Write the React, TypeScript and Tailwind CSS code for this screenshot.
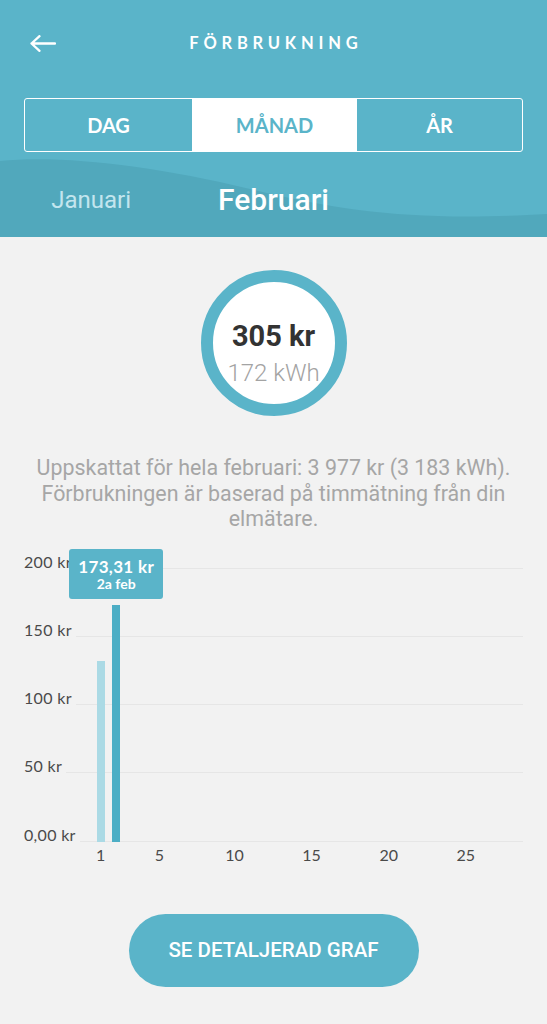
import React from "react";

const days = Array.from({ length: 28 }, (_, i) => i + 1);
const values: Record<number, number> = { 1: 131.9, 2: 173.31 };
const xLabels = [1, 5, 10, 15, 20, 25];
const yLabels = ["200 kr", "150 kr", "100 kr", "50 kr", "0,00 kr"];

const App = () => {
  return (
    <div className="min-h-screen w-full bg-[#f2f2f2] font-['Roboto',sans-serif]">
      {/* header */}
      <div className="relative h-[237px] bg-[#5ab4c9] overflow-hidden">
        <svg
          className="absolute left-0 bottom-0"
          width="547"
          height="80"
          viewBox="0 0 547 80"
          preserveAspectRatio="none"
        >
          <path
            d="M0 4 C60 -2 150 8 250 32 C350 56 420 64 547 57 L547 80 L0 80 Z"
            fill="#51a8bc"
          />
        </svg>

        <div className="relative grid grid-cols-[1fr_auto_1fr] items-center pt-[30px] h-[57px] px-[30px]">
          <svg width="26" height="17" viewBox="0 0 26 17" fill="none">
            <path
              d="M1.5 8.5H25 M9.5 1.2L1.5 8.5L9.5 15.8"
              stroke="white"
              strokeWidth="2.3"
              strokeLinecap="round"
              strokeLinejoin="round"
            />
          </svg>
          <h1 className="font-['Lato',sans-serif] font-bold text-[16.5px] leading-none tracking-[0.29em] pl-[0.29em] text-white">
            FÖRBRUKNING
          </h1>
          <div />
        </div>

        <div className="relative mx-[24px] mt-[41px] grid grid-cols-[167px_165px_1fr] h-[54px] border-[1.5px] border-white rounded-[3px] font-['Lato',sans-serif] font-bold text-[20px] text-white">
          <div className="flex items-center justify-center">DAG</div>
          <div className="flex items-center justify-center bg-white text-[#5ab4c9]">MÅNAD</div>
          <div className="flex items-center justify-center">ÅR</div>
        </div>

        <div className="relative grid grid-cols-3 mt-[25px] h-[36px] items-center">
          <div className="text-center text-[24px] text-[#c3e5ee]">Januari</div>
          <div className="text-center text-[30px] font-medium text-white">Februari</div>
          <div />
        </div>
      </div>

      {/* total */}
      <div className="flex justify-center mt-[33px]">
        <div className="w-[146px] h-[146px] rounded-full border-[12px] border-[#5ab4c9] bg-white flex flex-col items-center pt-[37px]">
          <div className="text-[29px] font-bold text-[#333333] leading-[34px]">305 kr</div>
          <div className="text-[24px] font-light text-[#a3a3a3] leading-[30px] mt-[5px]">172 kWh</div>
        </div>
      </div>

      <p className="mt-[39px] px-[24px] text-center text-[21.4px] leading-[25.5px] text-[#a6a6a6]">
        Uppskattat för hela februari: 3 977 kr (3 183 kWh). Förbrukningen är baserad på timmätning från din elmätare.
      </p>

      {/* chart */}
      <div className="relative mt-[17px] pl-[24px] pr-[24px] font-['Lato',sans-serif]">
        <div className="flex flex-col">
          {yLabels.map((label, i) => (
            <div
              key={label}
              className={`flex items-end ${i === 0 ? "h-[20px]" : "h-[68.25px]"}`}
            >
              <span className="text-[16px] leading-[16px] tracking-[0.02em] text-[#4a4a4a] pr-[4px] mb-[-1px] whitespace-nowrap">
                {label}
              </span>
              <div className="flex-1 h-px bg-[#e6e6e6]" />
            </div>
          ))}
        </div>

        <div className="absolute left-[93.4px] top-[20px] w-[425.6px] h-[273px] flex items-end">
          {days.map((d) => {
            const v = values[d];
            return (
              <div key={d} className="relative flex-1 flex justify-center items-end h-full">
                {v !== undefined && (
                  <div
                    className={`relative w-[8px] ${d === 2 ? "bg-[#4daec5]" : "bg-[#abdae5]"}`}
                    style={{ height: `${(v / 200) * 273}px` }}
                  >
                    {d === 2 && (
                      <div className="absolute bottom-full mb-[6px] left-1/2 -translate-x-1/2 w-[94px] h-[50px] rounded-[3px] bg-[#5ab4c9] text-white flex flex-col items-center justify-center">
                        <div className="text-[17px] font-bold leading-[19px] tracking-[0.02em]">173,31 kr</div>
                        <div className="text-[14px] font-bold leading-[15px]">2a feb</div>
                      </div>
                    )}
                  </div>
                )}
              </div>
            );
          })}
        </div>

        <div className="flex mt-[5px] ml-[69.4px] w-[425.6px]">
          {days.map((d) => (
            <div key={d} className="flex-1 text-center text-[16px] leading-[16px] text-[#4a4a4a] whitespace-nowrap">
              {xLabels.includes(d) ? d : ""}
            </div>
          ))}
        </div>
      </div>

      <div className="flex justify-center mt-[51px] pb-[37px]">
        <button
          type="button"
          className="w-[290px] h-[73px] rounded-full bg-[#5ab4c9] text-white text-[20.5px] font-medium"
        >
          SE DETALJERAD GRAF
        </button>
      </div>
    </div>
  );
};

export default App;
